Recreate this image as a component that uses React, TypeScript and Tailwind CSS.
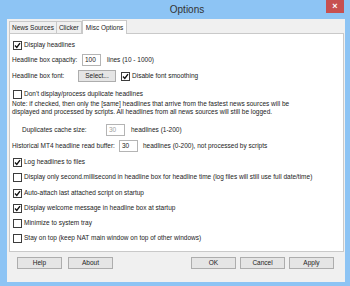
import type { ReactNode } from "react"

const Check = ({ checked }: { checked?: boolean }) => (
  <span className="flex h-[9px] w-[9px] shrink-0 items-center justify-center border border-[#3c3c3c] bg-white">
    {checked && (
      <svg width="7" height="7" viewBox="0 0 7 7">
        <path d="M1 3.6 L2.8 5.4 L6 1.2" fill="none" stroke="#111" strokeWidth="1.4" />
      </svg>
    )}
  </span>
)

const CheckRow = ({ checked, label, className = "" }: { checked?: boolean; label: string; className?: string }) => (
  <div className={`flex h-[12px] items-center gap-[2px] pl-[3px] ${className}`}>
    <Check checked={checked} />
    <span>{label}</span>
  </div>
)

const Field = ({ value, disabled }: { value: string; disabled?: boolean }) => (
  <span
    className={`flex h-[12px] w-[19px] items-center border border-[#b4b4b4] bg-white pl-[2px] ${disabled ? "text-[#a0a0a0]" : ""}`}
  >
    {value}
  </span>
)

const Btn = ({ children, className = "" }: { children: ReactNode; className?: string }) => (
  <span
    className={`flex h-[12px] w-[45px] items-center justify-center border border-[#adadad] bg-[#e5e5e5] ${className}`}
  >
    {children}
  </span>
)

export default function App() {
  return (
    <div className="flex h-[286px] w-[350px] flex-col bg-[#8dc4f4] font-['Liberation_Sans',Arial,sans-serif] text-[6.5px] leading-[8px] text-[#222]">
      {/* title bar */}
      <div className="flex h-[19px] shrink-0 items-start">
        <div className="flex-1" />
        <div className="pt-[4px] pl-[30px] text-[10px] leading-[12px] text-[#333]">Options</div>
        <div className="flex flex-1 justify-end pr-[6px]">
          <div className="flex h-[13px] w-[18px] items-center justify-center bg-[#c75050] text-[9px] font-bold leading-none text-white">
            ×
          </div>
        </div>
      </div>

      {/* client */}
      <div className="mb-[4px] ml-[7px] mr-[5px] flex flex-1 flex-col bg-[#f0f0f0]">
        {/* tabs */}
        <div className="flex h-[14px] items-end pl-[2px] pt-[1px]">
          <div className="flex h-[12px] items-center border border-b-0 border-[#c9c9c9] bg-[#f0f0f0] px-[2px]">News Sources</div>
          <div className="flex h-[12px] items-center border border-b-0 border-l-0 border-[#c9c9c9] bg-[#f0f0f0] px-[2px]">Clicker</div>
          <div className="relative z-10 -mb-px flex h-[14px] items-center border border-b-0 border-[#c9c9c9] bg-white px-[3px]">
            Misc Options
          </div>
        </div>

        {/* panel */}
        <div className="ml-[2px] mr-[1px] flex h-[219px] flex-col border border-[#c9c9c9] bg-white pt-[5px]">
          <CheckRow checked label="Display headlines" />

          <div className="mt-[3px] flex h-[12px] items-center pl-[2px]">
            <span className="w-[70px]">Headline box capacity:</span>
            <Field value="100" />
            <span className="ml-[6px]">lines (10 - 1000)</span>
          </div>

          <div className="mt-[4px] flex h-[12px] items-center pl-[2px]">
            <span className="w-[66px]">Headline box font:</span>
            <span className="flex h-[12px] w-[38px] items-center justify-center border border-[#adadad] bg-[#e5e5e5]">
              Select...
            </span>
            <span className="ml-[5px] flex items-center gap-[2px]">
              <Check checked />
              <span>Disable font smoothing</span>
            </span>
          </div>

          <CheckRow className="mt-[6px]" label="Don't display/process duplicate headlines" />

          <div className="pl-[2px]">
            <p>Note: if checked, then only the [same] headlines that arrive from the fastest news sources will be</p>
            <p>displayed and processed by scripts. All headlines from all news sources will still be logged.</p>
          </div>

          <div className="mt-[8px] flex h-[12px] items-center pl-[12px]">
            <span className="w-[84px]">Duplicates cache size:</span>
            <Field value="30" disabled />
            <span className="ml-[6px]">headlines (1-200)</span>
          </div>

          <div className="mt-[4px] flex h-[12px] items-center pl-[2px]">
            <span className="w-[107px]">Historical MT4 headline read buffer:</span>
            <Field value="30" />
            <span className="ml-[5px]">headlines (0-200), not processed by scripts</span>
          </div>

          <CheckRow className="mt-[4px]" checked label="Log headlines to files" />
          <CheckRow
            className="mt-[3px]"
            label="Display only second.millisecond in headline box for headline time (log files will still use full date/time)"
          />
          <CheckRow className="mt-[4px]" checked label="Auto-attach last attached script on startup" />
          <CheckRow className="mt-[3px]" checked label="Display welcome message in headline box at startup" />
          <CheckRow className="mt-[3px]" label="Minimize to system tray" />
          <CheckRow className="mt-[3px]" label="Stay on top (keep NAT main window on top of other windows)" />
        </div>

        {/* buttons */}
        <div className="mt-[5px] flex items-center pl-[10px] pr-[11px]">
          <Btn>Help</Btn>
          <Btn className="ml-[6px]">About</Btn>
          <div className="flex-1" />
          <Btn>OK</Btn>
          <Btn className="ml-[4px]">Cancel</Btn>
          <Btn className="ml-[4px]">Apply</Btn>
        </div>
      </div>
    </div>
  )
}
